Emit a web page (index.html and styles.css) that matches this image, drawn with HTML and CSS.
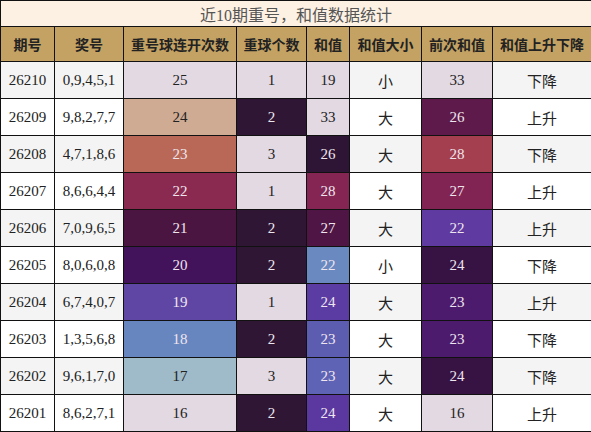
FILE: index.html
```html
<!DOCTYPE html>
<html lang="zh-CN">
<head>
    <meta charset="UTF-8">
    <meta name="viewport" content="width=device-width, initial-scale=1.0">
    <title>近10期重号，和值数据统计</title>
    <link rel="stylesheet" href="styles.css">
</head>
<body>
    <table class="stats">
        <colgroup>
            <col class="c-issue">
            <col class="c-nums">
            <col class="c-streak">
            <col class="c-repeat">
            <col class="c-sum">
            <col class="c-size">
            <col class="c-prev">
            <col class="c-trend">
        </colgroup>
        <thead>
            <tr>
                <th class="title" colspan="8">近10期重号，和值数据统计</th>
            </tr>
            <tr class="head">
                <th>期号</th>
                <th>奖号</th>
                <th>重号球连开次数</th>
                <th>重球个数</th>
                <th>和值</th>
                <th>和值大小</th>
                <th>前次和值</th>
                <th>和值上升下降</th>
            </tr>
        </thead>
        <tbody id="rows">
            <!-- rows are filled in by the script -->
        </tbody>
    </table>

    <script>
        const draws = [
            { issue: "26210", nums: "0,9,4,5,1", streak: [25, "#e2d9e3"], repeat: [1, "#e2d9e3"], sum: [19, "#e2d9e3"], size: "小", prev: [33, "#e2d9e3"], trend: "下降" },
            { issue: "26209", nums: "9,8,2,7,7", streak: [24, "#cfab93"], repeat: [2, "#2f1634"], sum: [33, "#e2d9e3"], size: "大", prev: [26, "#5d1a4a"], trend: "上升" },
            { issue: "26208", nums: "4,7,1,8,6", streak: [23, "#b96858"], repeat: [3, "#e2d9e3"], sum: [26, "#2f1535"], size: "大", prev: [28, "#a43f50"], trend: "下降" },
            { issue: "26207", nums: "8,6,6,4,4", streak: [22, "#8b2a50"], repeat: [1, "#e2d9e3"], sum: [28, "#842554"], size: "大", prev: [27, "#822453"], trend: "上升" },
            { issue: "26206", nums: "7,0,9,6,5", streak: [21, "#4b1541"], repeat: [2, "#2f1634"], sum: [27, "#4f1544"], size: "大", prev: [22, "#5f3aa0"], trend: "上升" },
            { issue: "26205", nums: "8,0,6,0,8", streak: [20, "#42125a"], repeat: [2, "#2f1634"], sum: [22, "#6989c0"], size: "小", prev: [24, "#361342"], trend: "下降" },
            { issue: "26204", nums: "6,7,4,0,7", streak: [19, "#5f46a4"], repeat: [1, "#e2d9e3"], sum: [24, "#5b3ca2"], size: "大", prev: [23, "#4d1b6e"], trend: "上升" },
            { issue: "26203", nums: "1,3,5,6,8", streak: [18, "#6785be"], repeat: [2, "#2f1634"], sum: [23, "#5c5db1"], size: "大", prev: [23, "#4d1b6e"], trend: "下降" },
            { issue: "26202", nums: "9,6,1,7,0", streak: [17, "#9fbac8"], repeat: [3, "#e2d9e3"], sum: [23, "#5f63b5"], size: "大", prev: [24, "#361342"], trend: "下降" },
            { issue: "26201", nums: "8,6,2,7,1", streak: [16, "#e2d9e3"], repeat: [2, "#2f1634"], sum: [24, "#5a38a0"], size: "大", prev: [16, "#e2d9e3"], trend: "上升" }
        ];

        // light text on dark cells, dark text on light ones
        function textColor(hex) {
            const r = parseInt(hex.slice(1, 3), 16);
            const g = parseInt(hex.slice(3, 5), 16);
            const b = parseInt(hex.slice(5, 7), 16);
            return (0.299 * r + 0.587 * g + 0.114 * b) > 150 ? "#222" : "#eee6ee";
        }

        function heat(cell) {
            const [value, bg] = cell;
            return `<td style="background:${bg};color:${textColor(bg)}">${value}</td>`;
        }

        const rows = document.getElementById('rows');
        draws.forEach(d => {
            const tr = document.createElement('tr');
            tr.innerHTML = `
                <td>${d.issue}</td>
                <td>${d.nums}</td>
                ${heat(d.streak)}
                ${heat(d.repeat)}
                ${heat(d.sum)}
                <td class="cn">${d.size}</td>
                ${heat(d.prev)}
                <td class="cn">${d.trend}</td>
            `;
            rows.appendChild(tr);
        });
    </script>
</body>
</html>
```

FILE: styles.css
```css
* {
    margin: 0;
    padding: 0;
    box-sizing: border-box;
}
body {
    font-family: "Liberation Serif", "Noto Sans CJK SC", serif;
    color: #222;
    background-color: #fff;
}
.stats {
    width: 591px;
    table-layout: fixed;
    border-collapse: collapse;
    border: 1px solid #111;
}
.c-issue { width: 54px; }
.c-nums { width: 69px; }
.c-streak { width: 113px; }
.c-repeat { width: 70px; }
.c-sum { width: 43px; }
.c-size { width: 72px; }
.c-prev { width: 71px; }
.c-trend { width: 99px; }
.stats th,
.stats td {
    border: 1px solid #111;
    text-align: center;
    white-space: nowrap;
    overflow: hidden;
}
.title {
    height: 26px;
    background-color: #fdf1e3;
    color: #555;
    font-size: 16px;
    font-weight: normal;
}
.head th {
    height: 35px;
    background-color: #c4a264;
    color: #222;
    font-family: "Noto Sans CJK SC", sans-serif;
    font-size: 14px;
    font-weight: bold;
}
.stats td {
    height: 37px;
    font-size: 15px;
}
.stats tbody tr:nth-child(odd) { background-color: #f4f4f4; }
.stats tbody tr:nth-child(even) { background-color: #fff; }
.stats td.cn {
    font-family: "Noto Sans CJK SC", sans-serif;
    font-size: 15px;
}
```
